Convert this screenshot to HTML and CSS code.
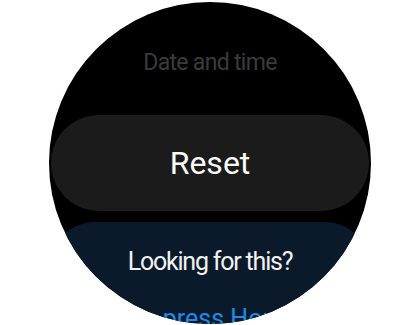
FILE: index.html
```html
<!DOCTYPE html>
<html lang="en">
<head>
<meta charset="utf-8">
<link rel="stylesheet" href="styles.css">
</head>
<body>
<div class="watch">
  <div class="title">Date and time</div>
  <div class="reset">Reset</div>
  <div class="card">
    <div class="card-title">Looking for this?</div>
    <div class="card-link">Double press Home key</div>
  </div>
</div>
</body>
</html>
```

FILE: styles.css
```css
html, body {
  margin: 0;
  padding: 0;
  background: #ffffff;
}
body {
  width: 420px;
  height: 325px;
  overflow: hidden;
  font-family: Roboto, "Noto Sans", sans-serif;
}
.watch {
  width: 322px;
  height: 322px;
  margin: 2px 0 0 49px;
  border-radius: 50%;
  background: #000;
  overflow: hidden;
  display: flex;
  flex-direction: column;
  align-items: stretch;
  padding: 0 2px;
  box-sizing: border-box;
}
.watch > * {
  flex-shrink: 0;
}
.title {
  margin-top: 46px;
  height: 30px;
  line-height: 30px;
  font-size: 23px;
  letter-spacing: -0.7px;
  color: #3b3b3b;
  text-align: center;
}
.reset {
  margin-top: 37px;
  height: 96px;
  border-radius: 48px;
  background: #1b1b1b;
  color: #fafafa;
  font-size: 32px;
  line-height: 32px;
  display: flex;
  align-items: center;
  justify-content: center;
}
.card {
  margin-top: 11px;
  height: 140px;
  border-radius: 44px;
  background: #0b1a2a;
  padding-top: 25px;
  box-sizing: border-box;
  display: flex;
  flex-direction: column;
  align-items: center;
}
.card-title {
  font-size: 25px;
  line-height: 30px;
  letter-spacing: -1.2px;
  color: #f2f2f2;
}
.card-link {
  margin-top: 27px;
  font-size: 25px;
  line-height: 30px;
  color: #1f8ae8;
}
```
